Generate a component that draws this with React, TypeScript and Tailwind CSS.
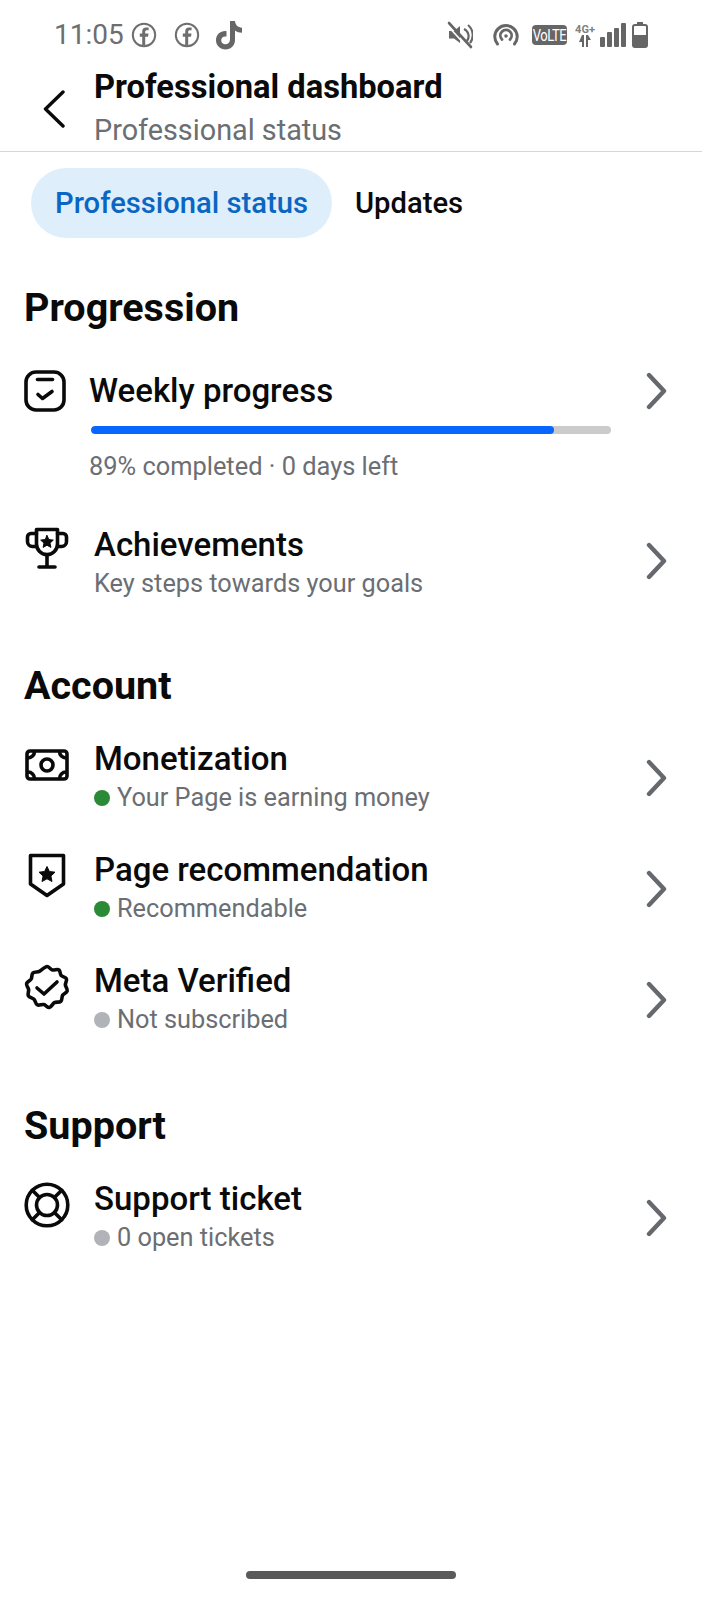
import React from "react";

const Chevron = () => (
  <svg width="24" height="38" viewBox="0 0 24 38" fill="none" className="shrink-0">
    <path d="M5 3 L20 19 L5 35" stroke="#65686c" strokeWidth="4.4" strokeLinecap="round" strokeLinejoin="round" />
  </svg>
);

const CheckIcon = () => (
  <svg width="42" height="42" viewBox="0 0 42 42" fill="none" stroke="#0a0a0a" strokeWidth="3.6" strokeLinecap="round" strokeLinejoin="round">
    <rect x="2" y="2" width="38" height="38" rx="10" />
    <path d="M13.5 9.5 H28.5" />
    <path d="M14 24.5 L18.5 28.5 L28 21.5" />
  </svg>
);

const TrophyIcon = () => (
  <svg width="44" height="44" viewBox="0 0 44 44" fill="none" stroke="#0a0a0a" strokeWidth="3.6" strokeLinecap="round" strokeLinejoin="round">
    <path d="M11.5 3.5 H32.5 V18 A10.5 10.5 0 0 1 11.5 18 Z" />
    <path d="M11.5 7.5 H6 A3.5 3.5 0 0 0 2.5 11 V15.5 A5 5 0 0 0 7.5 20.5 H11.5" />
    <path d="M32.5 7.5 H38 A3.5 3.5 0 0 1 41.5 11 V15.5 A5 5 0 0 1 36.5 20.5 H32.5" />
    <path d="M22 29 V40" />
    <path d="M14 41 H30" />
    <path d="M22 9.5 L23.9 13.6 L28.3 14.1 L25 17.1 L25.9 21.4 L22 19.2 L18.1 21.4 L19 17.1 L15.7 14.1 L20.1 13.6 Z" fill="#0a0a0a" strokeWidth="1" />
  </svg>
);

const MoneyIcon = () => (
  <svg width="44" height="32" viewBox="0 0 44 32" fill="none" stroke="#0a0a0a" strokeWidth="3.6" strokeLinecap="round" strokeLinejoin="round">
    <rect x="2" y="2" width="40" height="28" rx="3" />
    <circle cx="22" cy="16" r="6" />
    <path d="M9.5 2.5 A6.5 6.5 0 0 1 3 9" />
    <path d="M34.5 2.5 A6.5 6.5 0 0 0 41 9" />
    <path d="M9.5 29.5 A6.5 6.5 0 0 0 3 23" />
    <path d="M34.5 29.5 A6.5 6.5 0 0 1 41 23" />
  </svg>
);

const ShieldIcon = () => (
  <svg width="38" height="45" viewBox="0 0 38 45" fill="none" stroke="#0a0a0a" strokeWidth="3.6" strokeLinejoin="round">
    <path d="M2.5 2.5 H35.5 V31 L19 42.5 L2.5 31 Z" />
    <path d="M19 13.5 L21.4 18.5 L27 19.2 L22.9 23 L24 28.5 L19 25.8 L14 28.5 L15.1 23 L11 19.2 L16.6 18.5 Z" fill="#0a0a0a" strokeWidth="1" />
  </svg>
);

const BadgeIcon = () => (
  <svg width="46" height="46" viewBox="0 0 46 46" fill="none" stroke="#0a0a0a" strokeWidth="3.6" strokeLinecap="round" strokeLinejoin="round">
    <path d="M23 2.5 C25 2.5 26.5 5.5 28.5 6 C30.5 6.5 33.5 4.8 35 6 C36.5 7.2 36 10.2 37.2 11.6 C38.6 13 41.6 13 42.4 14.8 C43.2 16.6 41.2 19 41.4 21 C41.6 23 43.8 25 43.2 27 C42.6 29 39.6 29.6 38.6 31.2 C37.6 32.8 38.4 36 36.8 37.4 C35.2 38.8 32.2 37.6 30.4 38.6 C28.6 39.6 27.4 43.2 25.4 43.5 C23.4 43.8 21.8 41 19.8 40.6 C17.8 40.2 15 41.8 13.2 40.8 C11.4 39.8 11.4 36.6 10 35.2 C8.6 33.8 5.4 33.6 4.4 31.8 C3.4 30 5 27.4 4.6 25.4 C4.2 23.4 2 21.6 2.6 19.6 C3.2 17.6 6.2 16.8 7.2 15 C8.2 13.2 7.4 10.2 9 8.8 C10.6 7.4 13.6 8.4 15.4 7.4 C17.2 6.4 21 2.5 23 2.5 Z" />
    <path d="M13 24 L20 30 L33 18" />
  </svg>
);

const LifebuoyIcon = () => (
  <svg width="46" height="46" viewBox="0 0 46 46" fill="none" stroke="#0a0a0a" strokeWidth="3.6" strokeLinecap="round">
    <circle cx="23" cy="23" r="20.8" />
    <circle cx="23" cy="23" r="10.5" />
    <path d="M15.6 15.6 L8.3 8.3 M30.4 15.6 L37.7 8.3 M15.6 30.4 L8.3 37.7 M30.4 30.4 L37.7 37.7" />
  </svg>
);

const FbIcon = () => (
  <svg width="26" height="26" viewBox="0 0 26 26" fill="none">
    <circle cx="13" cy="13" r="11.2" stroke="#6e6e6e" strokeWidth="2" />
    <path d="M14.2 23.5 V14.8 H17 L17.5 11.6 H14.2 V9.8 C14.2 8.8 14.7 8.2 15.9 8.2 H17.6 V5.6 H15.2 C12.6 5.6 11.2 7.2 11.2 9.5 V11.6 H8.8 V14.8 H11.2 V23.5 Z" fill="#6e6e6e" />
  </svg>
);

const TikTok = () => (
  <svg width="28" height="30" viewBox="0 0 28 30">
    <path d="M15 1 H20 C20.3 4.8 22.8 7.4 27 7.7 V12.8 C24.2 12.8 22 12 20 10.6 V20 C20 25.6 15.8 29.5 10.5 29.5 C5.2 29.5 1 25.4 1 20.2 C1 14.6 5.8 10.5 11.5 11.2 V16.6 C8.6 15.9 6.2 17.6 6.2 20.2 C6.2 22.6 8.2 24.3 10.4 24.3 C12.9 24.3 15 22.6 15 19.6 Z" fill="#666" />
  </svg>
);

const StatusRight = () => (
  <div className="flex items-center">
    <svg width="26" height="28" viewBox="0 0 26 28" fill="none" className="mr-[20px]">
      <path d="M2 10 H7 L13 5 V22 L7 17.5 H2 Z" fill="#666" />
      <path d="M17 8 A8 8 0 0 1 20 20 M21 4 A13 13 0 0 1 23 22" stroke="#666" strokeWidth="2.2" />
      <path d="M0 4 L22 28" stroke="#fff" strokeWidth="1.6" />
      <path d="M2 2 L24 26" stroke="#666" strokeWidth="2.6" strokeLinecap="round" />
    </svg>
    <svg width="26" height="24" viewBox="0 0 26 24" fill="none" className="mr-[13px]">
      <path d="M4.5 21 A11.2 11.2 0 1 1 21.5 21" stroke="#666" strokeWidth="3" strokeLinecap="round" />
      <path d="M9 16.5 A5.6 5.6 0 1 1 17 16.5" stroke="#666" strokeWidth="2.8" strokeLinecap="round" />
      <circle cx="13" cy="13" r="1.8" fill="#666" />
    </svg>
    <div className="w-[35px] h-[20px] rounded-[4px] bg-[#666] flex items-center justify-center text-white text-[13px] leading-none font-['Roboto',sans-serif] mr-[5px] tracking-[-0.5px] overflow-hidden">
      <span className="scale-y-125">VoLTE</span>
    </div>
    <div className="w-[26px] flex flex-col items-center text-[#808080] mr-[2px]">
      <span className="text-[11px] leading-[11px] font-bold font-['Roboto',sans-serif]">4G+</span>
      <svg width="12" height="12" viewBox="0 0 12 12" fill="#666">
        <path d="M3 0 H5 V12 H3 V7 H0 Z" />
        <path d="M7 12 H9 V5 H12 L9 0 H7 Z" />
      </svg>
    </div>
    <div className="flex items-end gap-[2px] h-[24px] mr-[6px]">
      <div className="w-[5px] h-[10px] bg-[#666] rounded-[1px]" />
      <div className="w-[5px] h-[15px] bg-[#666] rounded-[1px]" />
      <div className="w-[5px] h-[19px] bg-[#666] rounded-[1px]" />
      <div className="w-[5px] h-[24px] bg-[#666] rounded-[1px]" />
    </div>
    <svg width="16" height="26" viewBox="0 0 16 26" fill="none">
      <rect x="5" y="0" width="6" height="3" fill="#666" />
      <rect x="1" y="3" width="14" height="22" rx="2" stroke="#666" strokeWidth="2" />
      <rect x="1" y="13" width="14" height="12" rx="1" fill="#666" />
    </svg>
  </div>
);

const Row = ({ icon, title, dot, sub, iconClass = "mb-[26px]", textClass = "-mt-[1px]" }: { icon: React.ReactNode; title: string; dot?: string; sub: string; iconClass?: string; textClass?: string }) => (
  <div className="flex items-center h-[111px] pl-[24px] pr-[34px]">
    <div className={`w-[46px] flex justify-center shrink-0 ${iconClass}`}>{icon}</div>
    <div className={`ml-[24px] flex-1 ${textClass}`}>
      <div className="text-[33px] leading-[42px] font-medium text-[#0a0a0a]">{title}</div>
      <div className="flex items-center text-[25.3px] leading-[36px] text-[#6b6e72]">
        {dot && <span className={`w-[16px] h-[16px] rounded-full mr-[7px] ${dot}`} />}
        {sub}
      </div>
    </div>
    <Chevron />
  </div>
);

export default function App() {
  return (
    <div className="w-[702px] h-[1600px] bg-white flex flex-col font-['Roboto',sans-serif] relative overflow-hidden">
      <div className="flex items-center justify-between h-[66px] pt-[4px] pl-[54px] pr-[54px]">
        <div className="flex items-center">
          <span className="text-[28px] text-[#6e6e6e] mr-[7px]">11:05</span>
          <FbIcon />
          <span className="w-[17px]" />
          <FbIcon />
          <span className="w-[15px]" />
          <TikTok />
        </div>
        <StatusRight />
      </div>
      <div className="flex items-start h-[86px] pt-[1px] border-b border-[#d5d6d8]">
        <svg width="24" height="38" viewBox="0 0 24 38" fill="none" className="ml-[42px] mr-[28px] mt-[23px]">
          <path d="M21 2 L3.5 19 L21 36" stroke="#0a0a0a" strokeWidth="3.4" strokeLinecap="round" strokeLinejoin="round" />
        </svg>
        <div>
          <div className="text-[32.7px] leading-[40px] font-bold text-[#0a0a0a]">Professional dashboard</div>
          <div className="text-[28.8px] leading-[46px] text-[#6b6e72]">Professional status</div>
        </div>
      </div>
      <div className="flex items-center pt-[16px] pl-[31px]">
        <div className="h-[70px] w-[301px] pt-[2px] rounded-full bg-[#dfeefb] flex items-center justify-center text-[#0a66c2] text-[29.2px] font-medium">Professional status</div>
        <div className="ml-[23px] pt-[2px] text-[29.2px] font-medium text-[#0a0a0a]">Updates</div>
      </div>
      <h2 className="pl-[24px] mt-[45px] text-[39.5px] leading-[50px] font-bold text-[#0a0a0a]">Progression</h2>
      <div className="pl-[24px] pr-[34px] mt-[37px] flex items-start">
        <div className="shrink-0"><CheckIcon /></div>
        <div className="ml-[23px] flex-1">
          <div className="text-[33px] leading-[42px] font-medium text-[#0a0a0a]">Weekly progress</div>
          <div className="mt-[14px] ml-[2px] w-[520px] h-[8px] rounded-full bg-[#cbcbcb] overflow-hidden">
            <div className="h-full rounded-full bg-[#0866ff]" style={{ width: "89%" }} />
          </div>
          <div className="mt-[15px] text-[25.4px] leading-[34px] text-[#6b6e72]">89% completed · 0 days left</div>
        </div>
        <div className="mt-[2px]"><Chevron /></div>
      </div>
      <div className="mt-[22px]">
        <Row icon={<TrophyIcon />} iconClass="mb-[25px]" textClass="mt-[5px]" title="Achievements" sub="Key steps towards your goals" />
      </div>
      <h2 className="pl-[24px] mt-[45px] text-[39.5px] leading-[50px] font-bold text-[#0a0a0a]">Account</h2>
      <div className="mt-[11px]">
        <Row icon={<MoneyIcon />} title="Monetization" dot="bg-[#2a8a36]" sub="Your Page is earning money" />
        <Row icon={<ShieldIcon />} title="Page recommendation" dot="bg-[#2a8a36]" sub="Recommendable" />
        <Row icon={<BadgeIcon />} title="Meta Verified" dot="bg-[#b0b3b8]" sub="Not subscribed" />
      </div>
      <h2 className="pl-[24px] mt-[46px] text-[39.5px] leading-[50px] font-bold text-[#0a0a0a]">Support</h2>
      <div className="mt-[11px]">
        <Row icon={<LifebuoyIcon />} title="Support ticket" dot="bg-[#b0b3b8]" sub="0 open tickets" />
      </div>
      <div className="absolute left-[246px] top-[1571px] w-[210px] h-[8px] rounded-full bg-[#5a5a5a]" />
    </div>
  );
}
